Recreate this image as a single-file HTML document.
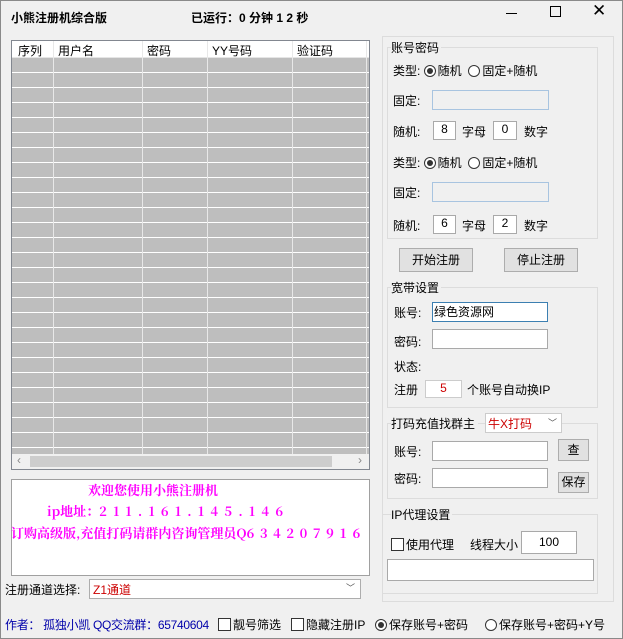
<!DOCTYPE html><html><head><meta charset="utf-8"><style>
*{box-sizing:border-box;margin:0;padding:0}
body{width:623px;height:639px;background:#f0f0f0;font:12px "Liberation Sans","Noto Sans CJK SC",sans-serif;color:#000;position:relative;overflow:hidden;border:1px solid #8a8a8a}
.a{position:absolute;white-space:nowrap}
.inp{position:absolute;background:#fff;border:1px solid #a9a9a9}
.btn{position:absolute;background:#e1e1e1;border:1px solid #adadad;text-align:center}
.grp{position:absolute;border:1px solid #dcdcdc}
.rad{display:inline-block;width:12px;height:12px;border:1px solid #333;border-radius:50%;vertical-align:-2px;margin-right:2px;background:#fff;position:relative}
.rad.on:after{content:"";position:absolute;left:2px;top:2px;width:6px;height:6px;border-radius:50%;background:#333}
.cb{display:inline-block;width:13px;height:13px;border:1px solid #333;background:#fff;vertical-align:-2px;margin-right:2px}
.m{color:#f0f;font-weight:bold;font-family:"Noto Serif CJK SC",serif}
</style></head><body>
<div class="a" style="left:10px;top:8px;font-weight:bold">小熊注册机综合版</div>
<div class="a" style="left:190px;top:8px;font-weight:bold">已运行：0 分钟 1 2 秒</div>
<div class="a" style="left:505px;top:12px;width:11px;border-top:1px solid #000"></div>
<div class="a" style="left:549px;top:5px;width:11px;height:11px;border:1px solid #000"></div>
<div class="a" style="left:591px;top:0px;font-size:17px">✕</div>

<div class="a" style="left:10px;top:39px;width:359px;height:430px;border:1px solid #828790;background:#fff">
<div style="position:absolute;left:0;top:0;width:357px;height:17px;background:#fff;border-bottom:1px solid #e5e5e5"></div>
<div style="position:absolute;left:0;top:17px;width:357px;height:396px;background:#bebebe;background-image:repeating-linear-gradient(#bebebe 0 14px,#fff 14px 15px)"></div>
<div style="position:absolute;left:41px;top:0;width:1px;height:413px;background:#e8e8e8"></div>
<div style="position:absolute;left:130px;top:0;width:1px;height:413px;background:#e8e8e8"></div>
<div style="position:absolute;left:195px;top:0;width:1px;height:413px;background:#e8e8e8"></div>
<div style="position:absolute;left:280px;top:0;width:1px;height:413px;background:#e8e8e8"></div>
<div style="position:absolute;left:354px;top:0;width:1px;height:413px;background:#e8e8e8"></div>
<div class="a" style="left:6px;top:1px">序列</div><div class="a" style="left:46px;top:1px">用户名</div><div class="a" style="left:135px;top:1px">密码</div><div class="a" style="left:200px;top:1px">YY号码</div><div class="a" style="left:285px;top:1px">验证码</div>
<div style="position:absolute;left:0;top:413px;width:357px;height:15px;background:#f0f0f0"><div style="position:absolute;left:18px;top:2px;width:302px;height:11px;background:#cdcdcd"></div><span class="a" style="left:5px;top:-1px;color:#888">‹</span><span class="a" style="left:346px;top:-1px;color:#888">›</span></div>
</div>

<div class="a" style="left:10px;top:478px;width:359px;height:97px;border:1px solid #a0a0a0;background:#fff">
<div class="a m" style="left:76px;top:0px;font-size:13px">欢迎您使用小熊注册机</div>
<div class="a m" style="left:35px;top:21px;font-size:13px">ip地址：<span style="letter-spacing:6.3px">211.161.145.146</span></div>
<div class="a m" style="left:-1px;top:43px;font-size:13px">订购高级版,充值打码请群内咨询管理员Q<span style="letter-spacing:5.6px">634207916</span></div>
</div>
<div class="a" style="left:4px;top:580px">注册通道选择:</div>
<div class="inp" style="left:88px;top:578px;width:272px;height:20px;border-color:#adadad"><span class="a" style="left:3px;top:1px;color:#c00">Z1通道</span><span class="a" style="left:256px;top:1px;font-size:9px;color:#555">﹀</span></div>
<div class="a" style="left:4px;top:615px;color:#00a;letter-spacing:-0.3px">作者： 孤独小凯 QQ交流群：65740604</div>
<div class="a" style="left:217px;top:615px"><span class="cb"></span>靓号筛选</div>
<div class="a" style="left:290px;top:615px"><span class="cb"></span>隐藏注册IP</div>
<div class="a" style="left:374px;top:615px"><span class="rad on"></span>保存账号+密码</div>
<div class="a" style="left:484px;top:615px"><span class="rad"></span>保存账号+密码+Y号</div>

<div class="grp" style="left:381px;top:35px;width:232px;height:566px"></div>
<div class="grp" style="left:386px;top:46px;width:211px;height:192px"></div>
<div class="a" style="left:390px;top:38px;background:#f0f0f0;padding-right:2px">账号密码</div>
<div class="a" style="left:392px;top:61px">类型: <span class="rad on"></span>随机 &nbsp;<span class="rad"></span>固定+随机</div>
<div class="a" style="left:392px;top:91px">固定:</div><div class="inp" style="left:431px;top:89px;width:117px;height:20px;border-color:#a8c4e0;background:#f0f0f0"></div>
<div class="a" style="left:392px;top:122px">随机:</div><div class="inp" style="left:432px;top:120px;width:23px;height:19px;text-align:center">8</div><div class="a" style="left:461px;top:122px">字母</div><div class="inp" style="left:492px;top:120px;width:24px;height:19px;text-align:center">0</div><div class="a" style="left:523px;top:122px">数字</div>
<div class="a" style="left:392px;top:153px">类型: <span class="rad on"></span>随机 &nbsp;<span class="rad"></span>固定+随机</div>
<div class="a" style="left:392px;top:183px">固定:</div><div class="inp" style="left:431px;top:181px;width:117px;height:20px;border-color:#a8c4e0;background:#f0f0f0"></div>
<div class="a" style="left:392px;top:216px">随机:</div><div class="inp" style="left:432px;top:214px;width:23px;height:19px;text-align:center">6</div><div class="a" style="left:461px;top:216px">字母</div><div class="inp" style="left:492px;top:214px;width:24px;height:19px;text-align:center">2</div><div class="a" style="left:523px;top:216px">数字</div>

<div class="btn" style="left:398px;top:247px;width:74px;height:24px;line-height:22px">开始注册</div>
<div class="btn" style="left:503px;top:247px;width:74px;height:24px;line-height:22px">停止注册</div>

<div class="grp" style="left:386px;top:286px;width:211px;height:121px"></div>
<div class="a" style="left:390px;top:278px;background:#f0f0f0;padding-right:2px">宽带设置</div>
<div class="a" style="left:393px;top:303px">账号:</div><div class="inp" style="left:431px;top:301px;width:116px;height:20px;border-color:#3c7fb1;padding-left:1px">绿色资源网</div>
<div class="a" style="left:393px;top:332px">密码:</div><div class="inp" style="left:431px;top:328px;width:116px;height:20px"></div>
<div class="a" style="left:393px;top:357px">状态:</div>
<div class="a" style="left:393px;top:380px">注册</div><div class="inp" style="left:424px;top:379px;width:37px;height:18px;text-align:center;color:#c00;border-color:#ccc">5</div><div class="a" style="left:466px;top:380px">个账号自动换IP</div>

<div class="grp" style="left:386px;top:422px;width:211px;height:76px"></div>
<div class="a" style="left:390px;top:414px;background:#f0f0f0;padding-right:3px">打码充值找群主</div>
<div class="inp" style="left:484px;top:412px;width:77px;height:20px;border-color:#ccc"><span class="a" style="left:2px;top:1px;color:#c00">牛X打码</span><span class="a" style="left:62px;top:2px;font-size:9px;color:#555">﹀</span></div>
<div class="a" style="left:393px;top:442px">账号:</div><div class="inp" style="left:431px;top:440px;width:116px;height:20px"></div>
<div class="btn" style="left:557px;top:438px;width:31px;height:22px;line-height:20px">查</div>
<div class="a" style="left:393px;top:469px">密码:</div><div class="inp" style="left:431px;top:467px;width:116px;height:20px"></div>
<div class="btn" style="left:557px;top:471px;width:31px;height:21px;line-height:19px">保存</div>

<div class="grp" style="left:381px;top:513px;width:216px;height:80px"></div>
<div class="a" style="left:390px;top:505px;background:#f0f0f0;padding-right:2px">IP代理设置</div>
<div class="a" style="left:390px;top:535px"><span class="cb"></span>使用代理</div>
<div class="a" style="left:469px;top:535px">线程大小</div>
<div class="inp" style="left:520px;top:530px;width:56px;height:23px;text-align:center;line-height:21px">100</div>
<div class="inp" style="left:386px;top:558px;width:207px;height:22px"></div>
</body></html>
